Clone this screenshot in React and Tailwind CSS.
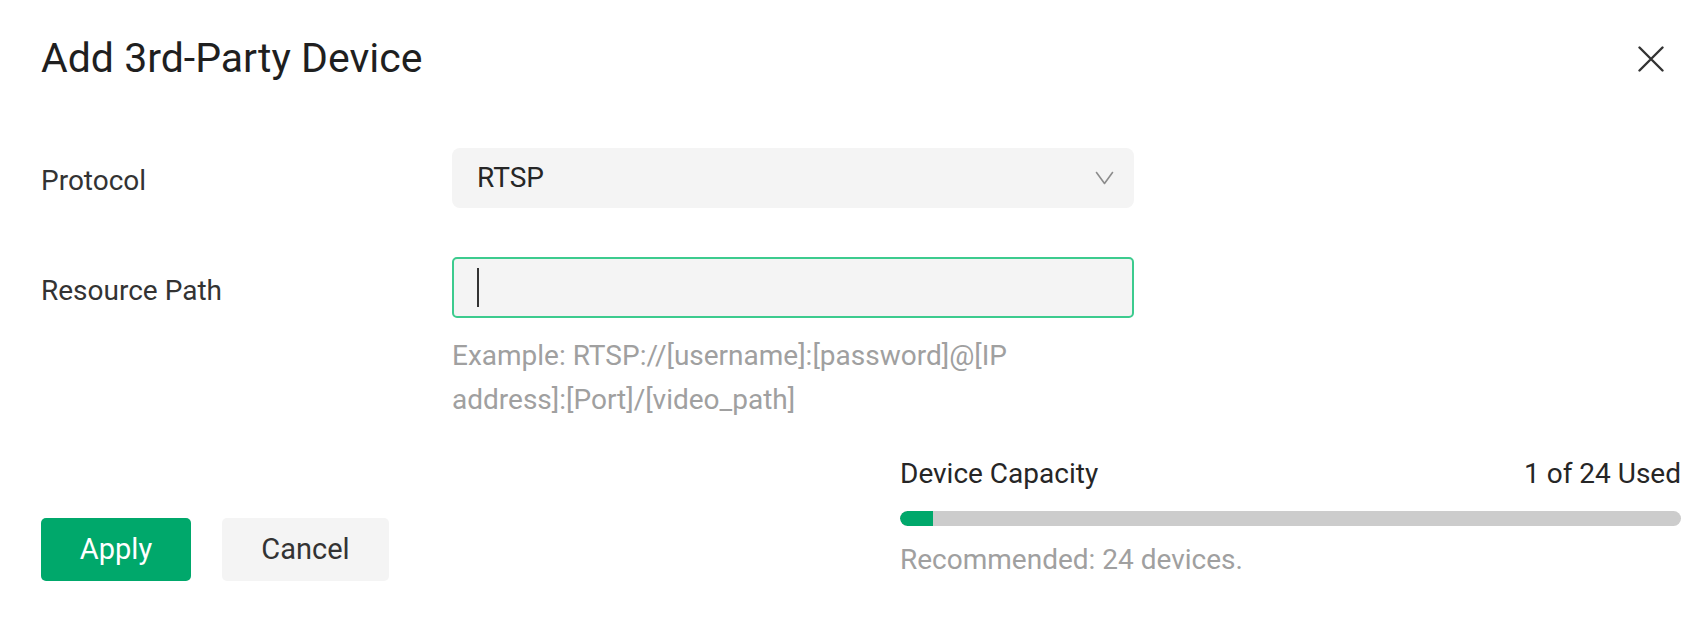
import React from "react";

function CloseIcon() {
  return (
    <svg width="26" height="26" viewBox="0 0 26 26" fill="none">
      <path d="M1.5 1.5 L24.5 24.5 M24.5 1.5 L1.5 24.5" stroke="#333333" strokeWidth="2.4" strokeLinecap="round" />
    </svg>
  );
}

function Chevron() {
  return (
    <svg width="19" height="14" viewBox="0 0 19 14" fill="none">
      <path d="M1.5 1.5 L9.5 12.5 L17.5 1.5" stroke="#8c8c8c" strokeWidth="1.6" strokeLinecap="round" strokeLinejoin="round" />
    </svg>
  );
}

export default function App() {
  const used = 1;
  const total = 24;
  return (
    <div
      className="w-[1708px] h-[639px] bg-white overflow-hidden text-[#333333]"
      style={{ fontFamily: "Roboto, 'Liberation Sans', sans-serif" }}
    >
      <div className="pt-[28px] pl-[41px] pr-[44px] flex items-center justify-between h-[89px]">
        <h1 className="text-[41px] leading-[61px] text-[#1f1f1f] font-normal">Add 3rd-Party Device</h1>
        <button className="w-[26px] h-[26px] flex items-center justify-center">
          <CloseIcon />
        </button>
      </div>

      <div className="pl-[41px] pt-[59px] flex items-center">
        <div className="w-[411px] pt-[6px] text-[28px]">Protocol</div>
        <div className="w-[682px] h-[60px] rounded-[8px] bg-[#f4f4f4] flex items-center justify-between pl-[25px] pr-[20px]">
          <span className="text-[28px] text-[#262626]">RTSP</span>
          <Chevron />
        </div>
      </div>

      <div className="pl-[41px] pt-[49px] flex items-start">
        <div className="w-[411px] h-[61px] pt-[6px] flex items-center text-[28px]">Resource Path</div>
        <div className="w-[682px]">
          <div className="h-[61px] rounded-[5px] border-2 border-[#3ccb8e] bg-[#f4f4f4] flex items-center pl-[23px]">
            <div className="w-[2px] h-[39px] bg-[#333333]" />
          </div>
          <div className="mt-[16px] text-[28px] leading-[44px] text-[#a0a0a0]">
            Example: RTSP://[username]:[password]@[IP{" "}
            <span className="whitespace-nowrap">address]:[Port]/[video_path]</span>
          </div>
        </div>
      </div>

      <div className="pl-[41px] pr-[27px] mt-[34px] flex items-start justify-between">
        <div className="pt-[62px] flex gap-[31px]">
          <button className="w-[150px] h-[63px] rounded-[5px] bg-[#00a86b] text-white text-[29px]">Apply</button>
          <button className="w-[167px] h-[63px] rounded-[5px] bg-[#f4f4f4] text-[#333333] text-[29px]">Cancel</button>
        </div>
        <div className="w-[781px]">
          <div className="h-[36px] flex items-center justify-between text-[28px] text-[#262626]">
            <span>Device Capacity</span>
            <span>{used} of {total} Used</span>
          </div>
          <div className="mt-[19px] h-[15px] rounded-full bg-[#cccccc] overflow-hidden">
            <div className="h-full bg-[#00a86b] rounded-l-full" style={{ width: `${(used / total) * 100}%` }} />
          </div>
          <div className="mt-[16px] h-[36px] flex items-center text-[28px] text-[#a0a0a0]">Recommended: 24 devices.</div>
        </div>
      </div>
    </div>
  );
}
